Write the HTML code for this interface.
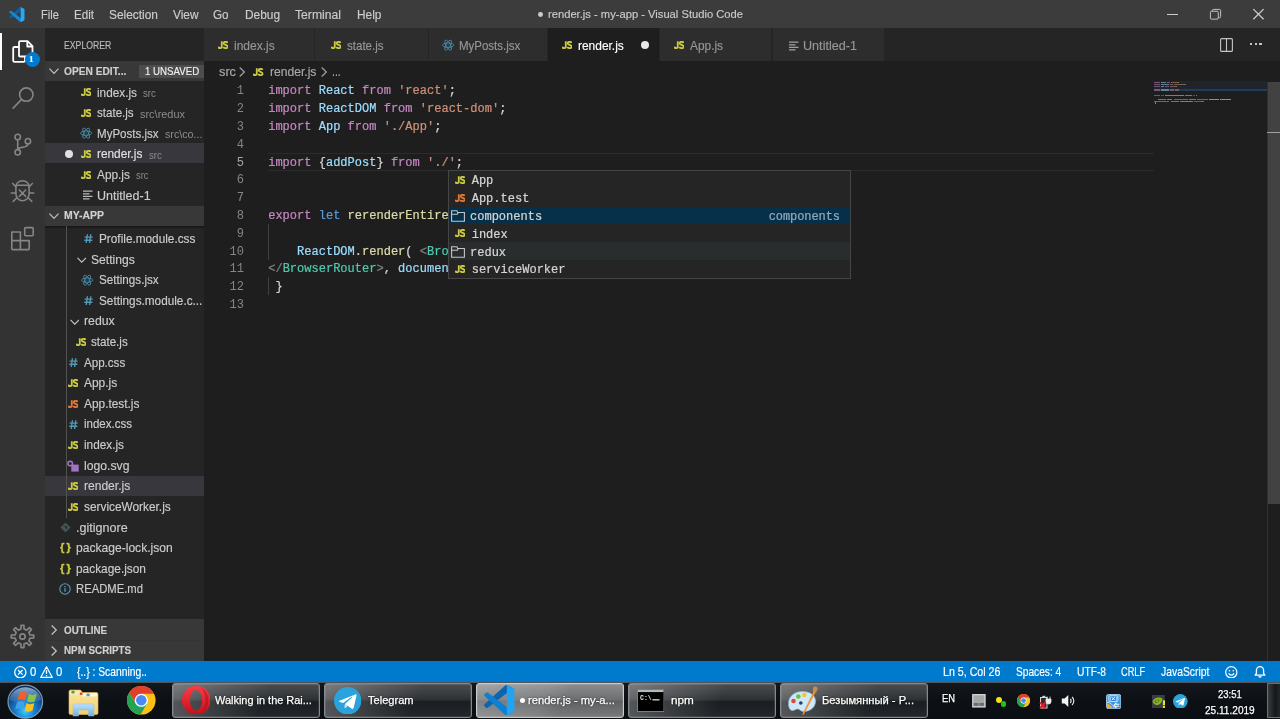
<!DOCTYPE html><html><head><meta charset="utf-8"><title>render.js - my-app - Visual Studio Code</title><style>
html,body{margin:0;padding:0;}
body{width:1280px;height:719px;overflow:hidden;background:#1e1e1e;position:relative;font-family:"Liberation Sans",sans-serif;font-size:12px;color:#ccc;}
div,svg,#w>span{position:absolute;box-sizing:border-box;}
#w{left:0;top:0;width:1280px;height:719px;will-change:transform;}
.t{white-space:pre;line-height:1;}
.ui{font-size:12px;color:#cccccc;-webkit-text-stroke-width:.15px;}
.mono{font-family:"Liberation Mono",monospace;font-size:12px;letter-spacing:0.015px;-webkit-text-stroke-width:.22px;}
.js{font-weight:bold;font-size:9.6px;letter-spacing:-0.5px;color:#cbcb41;white-space:pre;line-height:1;-webkit-text-stroke:.3px #cbcb41;}
.jso{color:#e37933;-webkit-text-stroke:.3px #e37933;}
.desc{font-size:10.8px;color:#8c8c8c;}
.ln{font-family:"Liberation Mono",monospace;font-size:12px;color:#858585;text-align:right;width:40px;left:204px;white-space:pre;line-height:1;}
.k{color:#c586c0}.v{color:#9cdcfe}.s{color:#ce9178}.b{color:#569cd6}.f{color:#dcdcaa}.p{color:#d4d4d4}.c{color:#4ec9b0}.g{color:#808080}
</style></head><body><div id="w">
<div style="left:0px;top:0px;width:1280px;height:28px;background:#3c3c3c;"></div>
<div style="left:0px;top:28px;width:45px;height:633.5px;background:#333333;"></div>
<div style="left:45px;top:28px;width:159.3px;height:633.5px;background:#252526;"></div>
<div style="left:204.3px;top:28px;width:1075.7px;height:33.4px;background:#252526;"></div>
<svg style="left:8.800px;top:6.700px" width="15.800" height="15.200" viewBox="0 0 100 100"><path d="M96.460 10.800 75.860.880a6.230 6.230 0 0 0-7.110 1.200L1.300 63.580a4.170 4.170 0 0 0 0 6.170l5.510 5a4.170 4.170 0 0 0 5.320.24L93.360 13.370C96.090 11.300 100 13.250 100 16.670v-.24a6.250 6.250 0 0 0-3.540-5.630z" fill="#0f5f9e"/><path d="M96.460 89.200 75.860 99.120a6.230 6.230 0 0 1-7.110-1.200L1.300 36.420a4.170 4.170 0 0 1 0-6.170l5.510-5a4.170 4.170 0 0 1 5.320-.24L93.360 86.630C96.090 88.700 100 86.750 100 83.330v.24a6.250 6.250 0 0 1-3.540 5.630z" fill="#1488d4"/><path d="M75.860 99.130a6.230 6.230 0 0 1-7.110-1.210c2.310 2.310 6.250.67 6.250-2.590V4.670c0-3.260-3.940-4.890-6.250-2.590a6.230 6.230 0 0 1 7.110-1.210l20.600 9.910A6.250 6.250 0 0 1 100 16.410v67.180a6.250 6.250 0 0 1-3.540 5.630z" fill="#25a9f5"/></svg>
<span class="t ui" style="left:40.6px;top:8.60px;font-size:12.2px;transform:scaleX(0.9063);transform-origin:0 50%;">File</span>
<span class="t ui" style="left:73.8px;top:8.60px;font-size:12.2px;transform:scaleX(0.9517);transform-origin:0 50%;">Edit</span>
<span class="t ui" style="left:108.8px;top:8.60px;font-size:12.2px;transform:scaleX(0.9773);transform-origin:0 50%;">Selection</span>
<span class="t ui" style="left:172.8px;top:8.60px;font-size:12.2px;transform:scaleX(0.9770);transform-origin:0 50%;">View</span>
<span class="t ui" style="left:213.4px;top:8.60px;font-size:12.2px;transform:scaleX(0.9591);transform-origin:0 50%;">Go</span>
<span class="t ui" style="left:244.7px;top:8.60px;font-size:12.2px;transform:scaleX(0.9743);transform-origin:0 50%;">Debug</span>
<span class="t ui" style="left:295.3px;top:8.60px;font-size:12.2px;transform:scaleX(0.9986);transform-origin:0 50%;">Terminal</span>
<span class="t ui" style="left:356.9px;top:8.60px;font-size:12.2px;transform:scaleX(0.9730);transform-origin:0 50%;">Help</span>
<div style="left:538px;top:12.400px;width:4.800px;height:4.800px;border-radius:50%;background:#cccccc"></div>
<span class="t ui" style="left:547.5px;top:9.20px;font-size:11.4px;transform:scaleX(0.9819);transform-origin:0 50%;">render.js - my-app - Visual Studio Code</span>
<div style="left:1167px;top:13.7px;width:11.3px;height:1px;background:#cccccc;"></div>
<svg style="left:1209.300px;top:8.200px" width="13" height="13" viewBox="0 0 14 14" fill="none" stroke="#cccccc" stroke-width="1"><rect x="1.5" y="3.5" width="8.500" height="8.500" rx="1.200"/><path d="M3.600 3.500V2.700a1.200 1.200 0 0 1 1.200-1.200h6.500a1.200 1.200 0 0 1 1.200 1.200v6.500a1.200 1.200 0 0 1-1.200 1.200h-1.300"/></svg>
<svg style="left:1252px;top:8px" width="13" height="13" viewBox="0 0 13 13" stroke="#cccccc" stroke-width="1.3"><path d="M1.300 1.100 11.600 11.300M11.600 1.100 1.300 11.300"/></svg>
<div style="left:0px;top:33px;width:2px;height:37px;background:#ffffff;"></div>
<svg style="left:10.5px;top:38.500px" width="24" height="25" viewBox="0 0 24 25" fill="none" stroke="#ffffff" stroke-width="1.800" stroke-linejoin="round"><path d="M8 17.500V3.500a1.300 1.300 0 0 1 1.300-1.300h7.200l5 5v9a1.300 1.300 0 0 1-1.300 1.300H9.300A1.300 1.300 0 0 1 8 16.200"/><path d="M16.300 2.400v5.100h5"/><path d="M7.800 8H3.500a1.300 1.300 0 0 0-1.300 1.300v12.200a1.300 1.300 0 0 0 1.300 1.300h9.200a1.300 1.300 0 0 0 1.300-1.300v-3.800"/></svg>
<div style="left:24.5px;top:51.800px;width:15px;height:15px;border-radius:50%;background:#007acc"></div>
<span class="t ui" style="left:29.0px;top:55.00px;font-size:9px;color:#ffffff;font-weight:bold;font-family:'Liberation Serif',serif;">1</span>
<svg style="left:10px;top:84.500px" width="26" height="26" viewBox="0 0 26 26" fill="none" stroke="#858585" stroke-width="1.600"><circle cx="16.300" cy="9.600" r="6.700"/><path d="M11.600 14.400 2.700 23.600"/></svg>
<svg style="left:8px;top:130px" width="30" height="30" viewBox="8 130 30 30" fill="none" stroke="#858585" stroke-width="1.600"><circle cx="17.700" cy="137" r="2.700"/><circle cx="17.700" cy="152.300" r="2.700"/><circle cx="27.900" cy="141.200" r="2.700"/><path d="M17.700 139.700v9.900M27.900 143.900c0 4.600-10.200 2.400-10.200 5.700"/></svg>
<svg style="left:8px;top:176px" width="30" height="30" viewBox="8 176 30 30" fill="none" stroke="#858585" stroke-width="1.500" stroke-linecap="round"><path d="M15.900 186.500c0-3 2.800-5.700 6.600-5.700s6.600 2.700 6.600 5.700v7.300c0 4-3 7-6.600 7s-6.600-3-6.600-7z"/><path d="M16.300 185.300h12.400M16 187l-3.300-3.600M29 187l3.300-3.600M15.800 193.100h-4.600M29.200 193.100h4.600M16.400 198.200l-3.200 3.200M28.600 198.200l3.200 3.200M19.300 190l6.400 6.400M25.700 190l-6.400 6.400"/></svg>
<svg style="left:8px;top:224px" width="30" height="30" viewBox="8 224 30 30" fill="none" stroke="#858585" stroke-width="1.600" stroke-linejoin="round"><path d="M11.800 232h8.600v8.600h8.800v8.200a.8.800 0 0 1-.8.800H12.600a.8.800 0 0 1-.8-.8zM20.400 240.600v9M11.800 240.600h8.600"/><rect x="24.700" y="227.600" width="8.500" height="8.100" rx="1"/></svg>
<svg style="left:10px;top:624.300px" width="25" height="25" viewBox="0 0 25 25" fill="none" stroke="#858585" stroke-width="1.700" stroke-linejoin="round"><circle cx="12.500" cy="12.500" r="2.700"/><path d="M10.960 5.060 L11.080 1.290 L13.920 1.290 L14.040 5.060 L16.670 6.150 L19.430 3.570 L21.430 5.570 L18.850 8.330 L19.940 10.960 L23.710 11.080 L23.710 13.920 L19.940 14.040 L18.850 16.670 L21.430 19.430 L19.430 21.430 L16.670 18.850 L14.040 19.940 L13.920 23.710 L11.080 23.710 L10.960 19.940 L8.330 18.850 L5.570 21.430 L3.570 19.430 L6.150 16.670 L5.060 14.040 L1.290 13.920 L1.290 11.080 L5.060 10.960 L6.150 8.330 L3.570 5.570 L5.570 3.570 L8.330 6.150z"/></svg>
<div style="left:204.3px;top:28px;width:110.0px;height:33.4px;background:#2d2d2d;"></div>
<svg style="left:217.7px;top:41.25px" width="10.150" height="7.900" viewBox="0 0 10.600 8.100" preserveAspectRatio="none" fill="none" stroke="#cbcb41" stroke-width="1.900"><path d="M3.950 0.200V5.300a1.650 1.650 0 0 1-3.500 .55"/><path d="M10.050 1.900C9.500 .55 5.900 .35 5.900 2.350c0 2 4.150 1.300 4.150 3.500 0 2-3.850 1.850-4.550 .25"/></svg>
<span class="t ui" style="left:233.7px;top:39.70px;font-size:12.2px;color:#969696;transform:scaleX(0.9872);transform-origin:0 50%;">index.js</span>
<div style="left:315.3px;top:28px;width:112.30000000000001px;height:33.4px;background:#2d2d2d;"></div>
<svg style="left:330.8px;top:41.25px" width="10.150" height="7.900" viewBox="0 0 10.600 8.100" preserveAspectRatio="none" fill="none" stroke="#cbcb41" stroke-width="1.900"><path d="M3.950 0.200V5.300a1.650 1.650 0 0 1-3.500 .55"/><path d="M10.050 1.900C9.500 .55 5.900 .35 5.900 2.350c0 2 4.150 1.300 4.150 3.500 0 2-3.850 1.850-4.550 .25"/></svg>
<span class="t ui" style="left:346.8px;top:39.70px;font-size:12.2px;color:#969696;transform:scaleX(0.9476);transform-origin:0 50%;">state.js</span>
<div style="left:428.6px;top:28px;width:118.19999999999993px;height:33.4px;background:#2d2d2d;"></div>
<svg style="left:441.8px;top:39.15px" width="12.3" height="12.3" viewBox="-12 -12 24 24" fill="none" stroke="#4f95b4" stroke-width="1.500"><ellipse rx="11" ry="4.300"/><ellipse rx="11" ry="4.300" transform="rotate(60)"/><ellipse rx="11" ry="4.300" transform="rotate(120)"/><circle r="2.300" fill="#0f4a63" stroke="none"/></svg>
<span class="t ui" style="left:459.3px;top:39.70px;font-size:12.2px;color:#969696;transform:scaleX(0.9429);transform-origin:0 50%;">MyPosts.jsx</span>
<div style="left:547.8px;top:28px;width:111.40000000000009px;height:33.4px;background:#1e1e1e;"></div>
<svg style="left:561.9px;top:41.25px" width="10.150" height="7.900" viewBox="0 0 10.600 8.100" preserveAspectRatio="none" fill="none" stroke="#cbcb41" stroke-width="1.900"><path d="M3.950 0.200V5.300a1.650 1.650 0 0 1-3.500 .55"/><path d="M10.050 1.900C9.500 .55 5.900 .35 5.900 2.350c0 2 4.150 1.300 4.150 3.500 0 2-3.850 1.850-4.550 .25"/></svg>
<span class="t ui" style="left:578px;top:39.70px;font-size:12.2px;color:#ffffff;transform:scaleX(0.9797);transform-origin:0 50%;">render.js</span>
<div style="left:660.2px;top:28px;width:111.29999999999995px;height:33.4px;background:#2d2d2d;"></div>
<svg style="left:674.1px;top:41.25px" width="10.150" height="7.900" viewBox="0 0 10.600 8.100" preserveAspectRatio="none" fill="none" stroke="#cbcb41" stroke-width="1.900"><path d="M3.950 0.200V5.300a1.650 1.650 0 0 1-3.500 .55"/><path d="M10.050 1.900C9.500 .55 5.900 .35 5.900 2.350c0 2 4.150 1.300 4.150 3.500 0 2-3.850 1.850-4.550 .25"/></svg>
<span class="t ui" style="left:690.4px;top:39.70px;font-size:12.2px;color:#969696;transform:scaleX(0.9742);transform-origin:0 50%;">App.js</span>
<div style="left:772.5px;top:28px;width:111.0px;height:33.4px;background:#2d2d2d;"></div>
<svg style="left:788.9px;top:40.50px" width="10" height="10" viewBox="0 0 10 10" stroke="#a0a0a0" stroke-width="1.300"><path d="M0 1.200h9.500M0 3.800h6.500M0 6.300h9.500M0 8.800h6.500"/></svg>
<span class="t ui" style="left:803px;top:39.70px;font-size:12.2px;color:#969696;transform:scaleX(1.0350);transform-origin:0 50%;">Untitled-1</span>
<div style="left:640.700px;top:41.100px;width:8px;height:8px;border-radius:50%;background:#e8e8e8"></div>
<svg style="left:1219.500px;top:37.500px" width="13" height="14" viewBox="0 0 13 14" fill="none" stroke="#c5c5c5" stroke-width="1.100"><rect x=".6" y=".6" width="11.800" height="12.800" rx="1"/><path d="M6.500.6v12.800"/></svg>
<div style="left:1250.0px;top:43.3px;width:2.2px;height:1.8px;background:#c5c5c5;"></div>
<div style="left:1254.7px;top:43.3px;width:2.2px;height:1.8px;background:#c5c5c5;"></div>
<div style="left:1259.4px;top:43.3px;width:2.2px;height:1.8px;background:#c5c5c5;"></div>
<span class="t ui" style="left:63.7px;top:41.20px;font-size:10.4px;color:#bbbbbb;transform:scaleX(0.8358);transform-origin:0 50%;">EXPLORER</span>
<div style="left:45px;top:61px;width:159.3px;height:20.4px;background:#383839;"></div>
<svg style="left:48.8px;top:68.30px" width="10" height="6.500" viewBox="0 0 10 6.500" fill="none" stroke="#c5c5c5" stroke-width="1.200"><path d="M.5.7 5 5.300 9.500.7"/></svg>
<span class="t ui" style="left:63.7px;top:67.20px;font-size:10.4px;color:#d0d0d0;font-weight:bold;transform:scaleX(0.9809);transform-origin:0 50%;">OPEN EDIT...</span>
<div style="left:138.7px;top:64.5px;width:65.6px;height:13.8px;background:#4d4d4d;"></div>
<span class="t ui" style="left:144.5px;top:67.10px;font-size:10.4px;color:#f0f0f0;transform:scaleX(0.9339);transform-origin:0 50%;">1 UNSAVED</span>
<svg style="left:80.9px;top:88.46px" width="10.150" height="7.900" viewBox="0 0 10.600 8.100" preserveAspectRatio="none" fill="none" stroke="#cbcb41" stroke-width="1.900"><path d="M3.950 0.200V5.300a1.650 1.650 0 0 1-3.500 .55"/><path d="M10.050 1.900C9.500 .55 5.900 .35 5.900 2.350c0 2 4.150 1.300 4.150 3.500 0 2-3.850 1.850-4.550 .25"/></svg>
<span class="t ui" style="left:97.1px;top:86.51px;font-size:12.2px;color:#cccccc;transform:scaleX(0.9654);transform-origin:0 50%;">index.js</span>
<span class="t desc" style="left:143px;top:87.91px;font-size:10.8px;transform:scaleX(0.8885);transform-origin:0 50%;">src</span>
<svg style="left:80.9px;top:109.07px" width="10.150" height="7.900" viewBox="0 0 10.600 8.100" preserveAspectRatio="none" fill="none" stroke="#cbcb41" stroke-width="1.900"><path d="M3.950 0.200V5.300a1.650 1.650 0 0 1-3.500 .55"/><path d="M10.050 1.900C9.500 .55 5.900 .35 5.900 2.350c0 2 4.150 1.300 4.150 3.500 0 2-3.850 1.850-4.550 .25"/></svg>
<span class="t ui" style="left:97.1px;top:107.12px;font-size:12.2px;color:#cccccc;transform:scaleX(0.9489);transform-origin:0 50%;">state.js</span>
<span class="t desc" style="left:139.5px;top:108.52px;font-size:10.8px;transform:scaleX(1.0134);transform-origin:0 50%;">src\redux</span>
<svg style="left:80.2px;top:127.09px" width="12.3" height="12.3" viewBox="-12 -12 24 24" fill="none" stroke="#4f95b4" stroke-width="1.500"><ellipse rx="11" ry="4.300"/><ellipse rx="11" ry="4.300" transform="rotate(60)"/><ellipse rx="11" ry="4.300" transform="rotate(120)"/><circle r="2.300" fill="#0f4a63" stroke="none"/></svg>
<span class="t ui" style="left:97.1px;top:127.74px;font-size:12.2px;color:#cccccc;transform:scaleX(0.9482);transform-origin:0 50%;">MyPosts.jsx</span>
<span class="t desc" style="left:164.5px;top:129.14px;font-size:10.8px;transform:scaleX(0.9921);transform-origin:0 50%;">src\co...</span>
<div style="left:45px;top:143.14499999999998px;width:159.3px;height:20.215px;background:#37373d;"></div>
<div style="left:64.800px;top:149.75px;width:8px;height:8px;border-radius:50%;background:#e0e0e0"></div>
<svg style="left:80.9px;top:150.30px" width="10.150" height="7.900" viewBox="0 0 10.600 8.100" preserveAspectRatio="none" fill="none" stroke="#cbcb41" stroke-width="1.900"><path d="M3.950 0.200V5.300a1.650 1.650 0 0 1-3.500 .55"/><path d="M10.050 1.900C9.500 .55 5.900 .35 5.900 2.350c0 2 4.150 1.300 4.150 3.500 0 2-3.850 1.850-4.550 .25"/></svg>
<span class="t ui" style="left:97.1px;top:148.35px;font-size:12.2px;color:#e0e0e0;transform:scaleX(0.9711);transform-origin:0 50%;">render.js</span>
<span class="t desc" style="left:148.75px;top:149.75px;font-size:10.8px;transform:scaleX(0.9024);transform-origin:0 50%;">src</span>
<svg style="left:80.9px;top:170.92px" width="10.150" height="7.900" viewBox="0 0 10.600 8.100" preserveAspectRatio="none" fill="none" stroke="#cbcb41" stroke-width="1.900"><path d="M3.950 0.200V5.300a1.650 1.650 0 0 1-3.500 .55"/><path d="M10.050 1.900C9.500 .55 5.900 .35 5.900 2.350c0 2 4.150 1.300 4.150 3.500 0 2-3.850 1.850-4.550 .25"/></svg>
<span class="t ui" style="left:97.1px;top:168.97px;font-size:12.2px;color:#cccccc;transform:scaleX(0.9712);transform-origin:0 50%;">App.js</span>
<span class="t desc" style="left:136.25px;top:170.37px;font-size:10.8px;transform:scaleX(0.8677);transform-origin:0 50%;">src</span>
<svg style="left:83px;top:190.38px" width="10" height="10" viewBox="0 0 10 10" stroke="#b8b8b8" stroke-width="1.300"><path d="M0 1.200h9.500M0 3.800h6.500M0 6.300h9.500M0 8.800h6.500"/></svg>
<span class="t ui" style="left:97.1px;top:189.58px;font-size:12.2px;color:#cccccc;transform:scaleX(1.0283);transform-origin:0 50%;">Untitled-1</span>
<div style="left:45px;top:205.5px;width:159.3px;height:20.4px;background:#383839;"></div>
<svg style="left:48.8px;top:212.60px" width="10" height="6.500" viewBox="0 0 10 6.500" fill="none" stroke="#c5c5c5" stroke-width="1.200"><path d="M.5.7 5 5.300 9.500.7"/></svg>
<span class="t ui" style="left:63.7px;top:211.40px;font-size:10.4px;color:#d0d0d0;font-weight:bold;transform:scaleX(1.0052);transform-origin:0 50%;">MY-APP</span>
<div style="left:45px;top:225.900px;width:159.300px;height:3.500px;background:linear-gradient(#141414,rgba(37,37,38,0))"></div>
<svg style="left:83.7px;top:234.20px" width="9" height="9.300" viewBox="0 0 10 10.500" fill="none" stroke="#519aba" stroke-width="1.550"><path d="M3.800.3 2.400 10.200M7.600.3 6.200 10.200M.6 3.500h9.200M.2 7.100h9.200"/></svg>
<span class="t ui" style="left:99.1px;top:232.90px;font-size:12.2px;transform:scaleX(0.9681);transform-origin:0 50%;">Profile.module.css</span>
<svg style="left:77px;top:257.00px" width="9.5" height="6.500" viewBox="0 0 10 6.500" fill="none" stroke="#c5c5c5" stroke-width="1.200"><path d="M.5.7 5 5.300 9.500.7"/></svg>
<span class="t ui" style="left:91.3px;top:253.60px;font-size:12.2px;transform:scaleX(0.9921);transform-origin:0 50%;">Settings</span>
<svg style="left:81.3px;top:273.95px" width="12.3" height="12.3" viewBox="-12 -12 24 24" fill="none" stroke="#4f95b4" stroke-width="1.500"><ellipse rx="11" ry="4.300"/><ellipse rx="11" ry="4.300" transform="rotate(60)"/><ellipse rx="11" ry="4.300" transform="rotate(120)"/><circle r="2.300" fill="#0f4a63" stroke="none"/></svg>
<span class="t ui" style="left:99.1px;top:274.20px;font-size:12.2px;transform:scaleX(0.9570);transform-origin:0 50%;">Settings.jsx</span>
<svg style="left:83.7px;top:296.10px" width="9" height="9.300" viewBox="0 0 10 10.500" fill="none" stroke="#519aba" stroke-width="1.550"><path d="M3.800.3 2.400 10.200M7.600.3 6.200 10.200M.6 3.500h9.200M.2 7.100h9.200"/></svg>
<span class="t ui" style="left:99.1px;top:294.80px;font-size:12.2px;transform:scaleX(0.9659);transform-origin:0 50%;">Settings.module.c...</span>
<svg style="left:69.5px;top:318.80px" width="9.5" height="6.500" viewBox="0 0 10 6.500" fill="none" stroke="#c5c5c5" stroke-width="1.200"><path d="M.5.7 5 5.300 9.500.7"/></svg>
<span class="t ui" style="left:83.8px;top:315.40px;font-size:12.2px;transform:scaleX(1.0066);transform-origin:0 50%;">redux</span>
<svg style="left:75.7px;top:337.85px" width="10.150" height="7.900" viewBox="0 0 10.600 8.100" preserveAspectRatio="none" fill="none" stroke="#cbcb41" stroke-width="1.900"><path d="M3.950 0.200V5.300a1.650 1.650 0 0 1-3.500 .55"/><path d="M10.050 1.900C9.500 .55 5.900 .35 5.900 2.350c0 2 4.150 1.300 4.150 3.500 0 2-3.850 1.850-4.550 .25"/></svg>
<span class="t ui" style="left:91.3px;top:336.00px;font-size:12.2px;transform:scaleX(0.9502);transform-origin:0 50%;">state.js</span>
<svg style="left:68.7px;top:357.90px" width="9" height="9.300" viewBox="0 0 10 10.500" fill="none" stroke="#519aba" stroke-width="1.550"><path d="M3.800.3 2.400 10.200M7.600.3 6.200 10.200M.6 3.500h9.200M.2 7.100h9.200"/></svg>
<span class="t ui" style="left:83.8px;top:356.60px;font-size:12.2px;transform:scaleX(0.9502);transform-origin:0 50%;">App.css</span>
<svg style="left:68.2px;top:379.05px" width="10.150" height="7.900" viewBox="0 0 10.600 8.100" preserveAspectRatio="none" fill="none" stroke="#cbcb41" stroke-width="1.900"><path d="M3.950 0.200V5.300a1.650 1.650 0 0 1-3.500 .55"/><path d="M10.050 1.900C9.500 .55 5.900 .35 5.900 2.350c0 2 4.150 1.300 4.150 3.500 0 2-3.850 1.850-4.550 .25"/></svg>
<span class="t ui" style="left:83.8px;top:377.20px;font-size:12.2px;transform:scaleX(0.9801);transform-origin:0 50%;">App.js</span>
<svg style="left:68.2px;top:399.65px" width="10.150" height="7.900" viewBox="0 0 10.600 8.100" preserveAspectRatio="none" fill="none" stroke="#e37933" stroke-width="1.900"><path d="M3.950 0.200V5.300a1.650 1.650 0 0 1-3.500 .55"/><path d="M10.050 1.900C9.500 .55 5.900 .35 5.900 2.350c0 2 4.150 1.300 4.150 3.500 0 2-3.850 1.850-4.550 .25"/></svg>
<span class="t ui" style="left:83.8px;top:397.80px;font-size:12.2px;transform:scaleX(0.9744);transform-origin:0 50%;">App.test.js</span>
<svg style="left:68.7px;top:419.70px" width="9" height="9.300" viewBox="0 0 10 10.500" fill="none" stroke="#519aba" stroke-width="1.550"><path d="M3.800.3 2.400 10.200M7.600.3 6.200 10.200M.6 3.500h9.200M.2 7.100h9.200"/></svg>
<span class="t ui" style="left:83.8px;top:418.40px;font-size:12.2px;transform:scaleX(0.9437);transform-origin:0 50%;">index.css</span>
<svg style="left:68.2px;top:440.85px" width="10.150" height="7.900" viewBox="0 0 10.600 8.100" preserveAspectRatio="none" fill="none" stroke="#cbcb41" stroke-width="1.900"><path d="M3.950 0.200V5.300a1.650 1.650 0 0 1-3.500 .55"/><path d="M10.050 1.900C9.500 .55 5.900 .35 5.900 2.350c0 2 4.150 1.300 4.150 3.500 0 2-3.850 1.850-4.550 .25"/></svg>
<span class="t ui" style="left:83.8px;top:439.00px;font-size:12.2px;transform:scaleX(0.9667);transform-origin:0 50%;">index.js</span>
<svg style="left:67.3px;top:459.70px" width="12" height="12" viewBox="0 0 12 12"><circle cx="3.200" cy="3.500" r="2.300" fill="none" stroke="#a074c4" stroke-width="1.500"/><rect x="4.300" y="4.600" width="7.400" height="7" fill="#a074c4"/></svg>
<span class="t ui" style="left:83.8px;top:459.60px;font-size:12.2px;transform:scaleX(1.0010);transform-origin:0 50%;">logo.svg</span>
<div style="left:45px;top:475.8px;width:159.3px;height:20px;background:#37373d;"></div>
<svg style="left:68.2px;top:482.05px" width="10.150" height="7.900" viewBox="0 0 10.600 8.100" preserveAspectRatio="none" fill="none" stroke="#cbcb41" stroke-width="1.900"><path d="M3.950 0.200V5.300a1.650 1.650 0 0 1-3.500 .55"/><path d="M10.050 1.900C9.500 .55 5.900 .35 5.900 2.350c0 2 4.150 1.300 4.150 3.500 0 2-3.850 1.850-4.550 .25"/></svg>
<span class="t ui" style="left:83.8px;top:480.20px;font-size:12.2px;transform:scaleX(0.9882);transform-origin:0 50%;">render.js</span>
<svg style="left:68.2px;top:502.65px" width="10.150" height="7.900" viewBox="0 0 10.600 8.100" preserveAspectRatio="none" fill="none" stroke="#cbcb41" stroke-width="1.900"><path d="M3.950 0.200V5.300a1.650 1.650 0 0 1-3.500 .55"/><path d="M10.050 1.900C9.500 .55 5.900 .35 5.900 2.350c0 2 4.150 1.300 4.150 3.500 0 2-3.850 1.850-4.550 .25"/></svg>
<span class="t ui" style="left:83.8px;top:500.80px;font-size:12.2px;transform:scaleX(0.9723);transform-origin:0 50%;">serviceWorker.js</span>
<svg style="left:60px;top:522.10px" width="11" height="11" viewBox="0 0 11 11"><rect x="1.900" y="1.900" width="7.200" height="7.200" transform="rotate(45 5.500 5.500)" fill="#41535b"/><path d="M4 3.500 6.500 6M6.500 4v3" stroke="#252526" stroke-width="1" fill="none"/></svg>
<span class="t ui" style="left:76.3px;top:521.50px;font-size:12.2px;transform:scaleX(1.0311);transform-origin:0 50%;">.gitignore</span>
<span class="t ui" style="left:60px;top:542.40px;font-size:11.2px;color:#cbcb41;letter-spacing:-0.5px;font-weight:bold;-webkit-text-stroke:.35px #cbcb41;">{ }</span>
<span class="t ui" style="left:76.3px;top:542.10px;font-size:12.2px;transform:scaleX(0.9912);transform-origin:0 50%;">package-lock.json</span>
<span class="t ui" style="left:60px;top:563.00px;font-size:11.2px;color:#cbcb41;letter-spacing:-0.5px;font-weight:bold;-webkit-text-stroke:.35px #cbcb41;">{ }</span>
<span class="t ui" style="left:76.3px;top:562.70px;font-size:12.2px;transform:scaleX(0.9739);transform-origin:0 50%;">package.json</span>
<svg style="left:59.2px;top:583.40px" width="12" height="12" viewBox="0 0 12 12" fill="none" stroke="#519aba" stroke-width="1.100"><circle cx="6" cy="6" r="5.200"/><path d="M6 5.200v3.600M6 3v1.300" stroke-width="1.400"/></svg>
<span class="t ui" style="left:76.3px;top:583.30px;font-size:12.2px;transform:scaleX(0.9238);transform-origin:0 50%;">README.md</span>
<div style="left:65.6px;top:226px;width:1px;height:291.5px;background:#525252;"></div>
<div style="left:204.3px;top:290px;width:4px;height:22px;background:#1e1e1e;"></div>
<div style="left:45px;top:619.3px;width:159.3px;height:42.2px;background:#383839;"></div>
<div style="left:45px;top:640.3px;width:159.3px;height:1px;background:#343435;"></div>
<svg style="left:51.3px;top:625.20px" width="6.500" height="10" viewBox="0 0 6.500 10" fill="none" stroke="#c5c5c5" stroke-width="1.200"><path d="M.7.5 5.300 5 .7 9.500"/></svg>
<span class="t ui" style="left:63.7px;top:625.90px;font-size:10.4px;color:#d0d0d0;font-weight:bold;transform:scaleX(0.9439);transform-origin:0 50%;">OUTLINE</span>
<svg style="left:51.3px;top:645.70px" width="6.500" height="10" viewBox="0 0 6.500 10" fill="none" stroke="#c5c5c5" stroke-width="1.200"><path d="M.7.5 5.300 5 .7 9.500"/></svg>
<span class="t ui" style="left:63.7px;top:646.40px;font-size:10.4px;color:#d0d0d0;font-weight:bold;transform:scaleX(0.9442);transform-origin:0 50%;">NPM SCRIPTS</span>
<span class="t ui" style="left:219px;top:66.40px;font-size:12.2px;color:#a9a9a9;transform:scaleX(1.0462);transform-origin:0 50%;">src</span>
<svg style="left:238.5px;top:67.30px" width="6.500" height="10" viewBox="0 0 6.500 10" fill="none" stroke="#a0a0a0" stroke-width="1.200"><path d="M.7.5 5.300 5 .7 9.500"/></svg>
<svg style="left:253.4px;top:67.75px" width="10.150" height="7.900" viewBox="0 0 10.600 8.100" preserveAspectRatio="none" fill="none" stroke="#cbcb41" stroke-width="1.900"><path d="M3.950 0.200V5.300a1.650 1.650 0 0 1-3.500 .55"/><path d="M10.050 1.900C9.500 .55 5.900 .35 5.900 2.350c0 2 4.150 1.300 4.150 3.500 0 2-3.850 1.850-4.550 .25"/></svg>
<span class="t ui" style="left:269.5px;top:66.40px;font-size:12.2px;color:#a9a9a9;transform:scaleX(0.9925);transform-origin:0 50%;">render.js</span>
<svg style="left:320.8px;top:67.30px" width="6.500" height="10" viewBox="0 0 6.500 10" fill="none" stroke="#a0a0a0" stroke-width="1.200"><path d="M.7.5 5.300 5 .7 9.500"/></svg>
<span class="t ui" style="left:331.6px;top:66.40px;font-size:12.2px;color:#a9a9a9;transform:scaleX(0.8553);transform-origin:0 50%;">...</span>
<div style="left:268px;top:152.81599999999997px;width:886px;height:17.804px;background:transparent;border-top:1px solid #2b2b2b;border-bottom:1px solid #2b2b2b;"></div>
<span class="ln" style="top:85.40px;color:#858585">1</span>
<span class="t mono" style="left:268.2px;top:85.40px;"><span class="k">import</span> <span class="v">React</span> <span class="k">from</span> <span class="s">'react'</span><span class="p">;</span></span>
<span class="ln" style="top:103.20px;color:#858585">2</span>
<span class="t mono" style="left:268.2px;top:103.20px;"><span class="k">import</span> <span class="v">ReactDOM</span> <span class="k">from</span> <span class="s">'react-dom'</span><span class="p">;</span></span>
<span class="ln" style="top:121.01px;color:#858585">3</span>
<span class="t mono" style="left:268.2px;top:121.01px;"><span class="k">import</span> <span class="v">App</span> <span class="k">from</span> <span class="s">'./App'</span><span class="p">;</span></span>
<span class="ln" style="top:138.81px;color:#858585">4</span>
<span class="ln" style="top:156.62px;color:#a8a8a8">5</span>
<span class="t mono" style="left:268.2px;top:156.62px;"><span class="k">import</span> <span class="p">{</span><span class="v">addPost</span><span class="p">}</span> <span class="k">from</span> <span class="s">'./'</span><span class="p">;</span></span>
<span class="ln" style="top:174.42px;color:#858585">6</span>
<span class="ln" style="top:192.22px;color:#858585">7</span>
<span class="ln" style="top:210.03px;color:#858585">8</span>
<span class="t mono" style="left:268.2px;top:210.03px;"><span class="k">export</span> <span class="b">let</span> <span class="f">rerenderEntire</span></span>
<span class="ln" style="top:227.83px;color:#858585">9</span>
<span class="ln" style="top:245.64px;color:#858585">10</span>
<span class="t mono" style="left:268.2px;top:245.64px;">    <span class="v">ReactDOM</span><span class="p">.</span><span class="f">render</span><span class="p">(</span> <span class="g">&lt;</span><span class="c">Bro</span></span>
<span class="ln" style="top:263.44px;color:#858585">11</span>
<span class="t mono" style="left:268.2px;top:263.44px;"><span class="g">&lt;/</span><span class="c">BrowserRouter</span><span class="g">&gt;</span><span class="p">,</span> <span class="v">documen</span></span>
<span class="ln" style="top:281.24px;color:#858585">12</span>
<span class="t mono" style="left:268.2px;top:281.24px;"> <span class="p">}</span></span>
<span class="ln" style="top:299.05px;color:#858585">13</span>
<div style="left:268px;top:224.03199999999998px;width:1px;height:35.608px;background:#404040;"></div>
<div style="left:268px;top:277.44399999999996px;width:1px;height:17.804px;background:#404040;"></div>
<div style="left:1154px;top:81.3px;width:113px;height:9.5px;background:#1f252b;"></div>
<div style="left:1154px;top:89.0px;width:113px;height:1.9px;background:#1f3c5a;"></div>
<div style="left:1154.3px;top:81.89999999999999px;width:5.699999999999999px;height:1.4px;background:#8a5f86;opacity:.8;"></div>
<div style="left:1160.95px;top:81.89999999999999px;width:4.75px;height:1.4px;background:#6d97b0;opacity:.8;"></div>
<div style="left:1166.6499999999999px;top:81.89999999999999px;width:3.8px;height:1.4px;background:#8a5f86;opacity:.8;"></div>
<div style="left:1171.3999999999999px;top:81.89999999999999px;width:6.6499999999999995px;height:1.4px;background:#8e6a59;opacity:.8;"></div>
<div style="left:1178.05px;top:81.89999999999999px;width:0.95px;height:1.4px;background:#888;opacity:.8;"></div>
<div style="left:1154.3px;top:83.77px;width:5.699999999999999px;height:1.4px;background:#8a5f86;opacity:.8;"></div>
<div style="left:1160.95px;top:83.77px;width:7.6px;height:1.4px;background:#6d97b0;opacity:.8;"></div>
<div style="left:1169.5px;top:83.77px;width:3.8px;height:1.4px;background:#8a5f86;opacity:.8;"></div>
<div style="left:1174.25px;top:83.77px;width:10.45px;height:1.4px;background:#8e6a59;opacity:.8;"></div>
<div style="left:1184.7px;top:83.77px;width:0.95px;height:1.4px;background:#888;opacity:.8;"></div>
<div style="left:1154.3px;top:85.63999999999999px;width:5.699999999999999px;height:1.4px;background:#8a5f86;opacity:.8;"></div>
<div style="left:1160.95px;top:85.63999999999999px;width:2.8499999999999996px;height:1.4px;background:#6d97b0;opacity:.8;"></div>
<div style="left:1164.75px;top:85.63999999999999px;width:3.8px;height:1.4px;background:#8a5f86;opacity:.8;"></div>
<div style="left:1169.5px;top:85.63999999999999px;width:6.6499999999999995px;height:1.4px;background:#8e6a59;opacity:.8;"></div>
<div style="left:1176.1499999999999px;top:85.63999999999999px;width:0.95px;height:1.4px;background:#888;opacity:.8;"></div>
<div style="left:1154.3px;top:89.38px;width:5.699999999999999px;height:1.4px;background:#8a5f86;opacity:.8;"></div>
<div style="left:1160.95px;top:89.38px;width:8.549999999999999px;height:1.4px;background:#6d97b0;opacity:.8;"></div>
<div style="left:1170.45px;top:89.38px;width:3.8px;height:1.4px;background:#8a5f86;opacity:.8;"></div>
<div style="left:1175.2px;top:89.38px;width:3.8px;height:1.4px;background:#8e6a59;opacity:.8;"></div>
<div style="left:1154.3px;top:94.99px;width:5.699999999999999px;height:1.4px;background:#8a5f86;opacity:.8;"></div>
<div style="left:1160.95px;top:94.99px;width:2.8499999999999996px;height:1.4px;background:#44698a;opacity:.8;"></div>
<div style="left:1164.75px;top:94.99px;width:19.0px;height:1.4px;background:#99997a;opacity:.8;"></div>
<div style="left:1184.7px;top:94.99px;width:7.6px;height:1.4px;background:#6d97b0;opacity:.8;"></div>
<div style="left:1193.25px;top:94.99px;width:1.9px;height:1.4px;background:#44698a;opacity:.8;"></div>
<div style="left:1196.1px;top:94.99px;width:0.95px;height:1.4px;background:#888;opacity:.8;"></div>
<div style="left:1158.1px;top:98.72999999999999px;width:7.6px;height:1.4px;background:#6d97b0;opacity:.8;"></div>
<div style="left:1166.6499999999999px;top:98.72999999999999px;width:5.699999999999999px;height:1.4px;background:#99997a;opacity:.8;"></div>
<div style="left:1174.25px;top:98.72999999999999px;width:13.299999999999999px;height:1.4px;background:#3f9884;opacity:.8;"></div>
<div style="left:1188.5px;top:98.72999999999999px;width:7.6px;height:1.4px;background:#6d97b0;opacity:.8;"></div>
<div style="left:1197.05px;top:98.72999999999999px;width:11.399999999999999px;height:1.4px;background:#3f9884;opacity:.8;"></div>
<div style="left:1209.3999999999999px;top:98.72999999999999px;width:9.5px;height:1.4px;background:#aaa;opacity:.8;"></div>
<div style="left:1219.85px;top:98.72999999999999px;width:11.399999999999999px;height:1.4px;background:#aaa;opacity:.8;"></div>
<div style="left:1154.3px;top:100.6px;width:15.2px;height:1.4px;background:#3f9884;opacity:.8;"></div>
<div style="left:1171.3999999999999px;top:100.6px;width:7.6px;height:1.4px;background:#6d97b0;opacity:.8;"></div>
<div style="left:1179.95px;top:100.6px;width:13.299999999999999px;height:1.4px;background:#99997a;opacity:.8;"></div>
<div style="left:1194.2px;top:100.6px;width:6.6499999999999995px;height:1.4px;background:#8e6a59;opacity:.8;"></div>
<div style="left:1200.85px;top:100.6px;width:2.8499999999999996px;height:1.4px;background:#888;opacity:.8;"></div>
<div style="left:1155.25px;top:102.47px;width:0.95px;height:1.4px;background:#999;opacity:.8;"></div>
<div style="left:1266.7px;top:81.6px;width:13.3px;height:422.5px;background:#424242;"></div>
<div style="left:1266.7px;top:81.6px;width:1px;height:580px;background:#303030;"></div>
<div style="left:1267px;top:131.7px;width:13px;height:1.6px;background:#a0a0a0;"></div>
<div style="left:448.2px;top:170.0px;width:402.6px;height:108.9px;background:#252526;border:1px solid #454545;"></div>
<svg style="left:455.3px;top:175.95px" width="10.150" height="7.900" viewBox="0 0 10.600 8.100" preserveAspectRatio="none" fill="none" stroke="#cbcb41" stroke-width="1.900"><path d="M3.950 0.200V5.300a1.650 1.650 0 0 1-3.500 .55"/><path d="M10.050 1.900C9.500 .55 5.900 .35 5.900 2.350c0 2 4.150 1.300 4.150 3.500 0 2-3.850 1.850-4.550 .25"/></svg>
<span class="t mono" style="left:471.7px;top:175.30px;color:#d4d4d4">App</span>
<svg style="left:455.3px;top:193.76px" width="10.150" height="7.900" viewBox="0 0 10.600 8.100" preserveAspectRatio="none" fill="none" stroke="#e37933" stroke-width="1.900"><path d="M3.950 0.200V5.300a1.650 1.650 0 0 1-3.500 .55"/><path d="M10.050 1.900C9.500 .55 5.900 .35 5.900 2.350c0 2 4.150 1.300 4.150 3.500 0 2-3.850 1.850-4.550 .25"/></svg>
<span class="t mono" style="left:471.7px;top:193.10px;color:#d4d4d4">App.test</span>
<div style="left:449.2px;top:206.608px;width:400.6px;height:17.804px;background:#062f4a;"></div>
<svg style="left:451.3px;top:210.01px" width="14" height="12" viewBox="0 0 14 12" fill="none" stroke="#c5c5c5" stroke-width="1.100"><path d="M.6 11.300V.7h5.200l1 1.800h6.600v8.800z"/><path d="M.6 4.300h5.700l1-1.800"/></svg>
<span class="t mono" style="left:470px;top:210.91px;color:#d4d4d4">components</span>
<svg style="left:455.3px;top:229.36px" width="10.150" height="7.900" viewBox="0 0 10.600 8.100" preserveAspectRatio="none" fill="none" stroke="#cbcb41" stroke-width="1.900"><path d="M3.950 0.200V5.300a1.650 1.650 0 0 1-3.500 .55"/><path d="M10.050 1.900C9.500 .55 5.900 .35 5.900 2.350c0 2 4.150 1.300 4.150 3.500 0 2-3.850 1.850-4.550 .25"/></svg>
<span class="t mono" style="left:471.7px;top:228.71px;color:#d4d4d4">index</span>
<div style="left:449.2px;top:242.216px;width:400.6px;height:17.804px;background:#2a2d2e;"></div>
<svg style="left:451.3px;top:245.62px" width="14" height="12" viewBox="0 0 14 12" fill="none" stroke="#c5c5c5" stroke-width="1.100"><path d="M.6 11.300V.7h5.200l1 1.800h6.600v8.800z"/><path d="M.6 4.300h5.700l1-1.800"/></svg>
<span class="t mono" style="left:470px;top:246.52px;color:#d4d4d4">redux</span>
<svg style="left:455.3px;top:264.97px" width="10.150" height="7.900" viewBox="0 0 10.600 8.100" preserveAspectRatio="none" fill="none" stroke="#cbcb41" stroke-width="1.900"><path d="M3.950 0.200V5.300a1.650 1.650 0 0 1-3.500 .55"/><path d="M10.050 1.900C9.500 .55 5.900 .35 5.900 2.350c0 2 4.150 1.300 4.150 3.500 0 2-3.850 1.850-4.550 .25"/></svg>
<span class="t mono" style="left:471.7px;top:264.32px;color:#d4d4d4">serviceWorker</span>
<span class="t mono" style="left:768.700px;top:210.91px;color:#8fa9bd;letter-spacing:-0.07px">components</span>
<div style="left:0px;top:661.3px;width:1280px;height:20.9px;background:#007acc;"></div>
<svg style="left:14px;top:665.70px" width="12.600" height="12.600" viewBox="0 0 12.600 12.600" fill="none" stroke="#ffffff" stroke-width="1.300"><circle cx="6.300" cy="6.300" r="5.600"/><path d="M4 4l4.600 4.600M8.600 4 4 8.600"/></svg>
<span class="t ui" style="left:30px;top:666.20px;font-size:12.2px;color:#ffffff;transform:scaleX(0.9290);transform-origin:0 50%;">0</span>
<svg style="left:39.500px;top:665.70px" width="13" height="12.200" viewBox="0 0 13 12.200" fill="none" stroke="#ffffff" stroke-width="1.250" stroke-linejoin="round"><path d="M6.500.8 12.300 11.500H.7z"/><path d="M6.500 4.300v3.800M6.500 9v1.300" stroke-width="1.300"/></svg>
<span class="t ui" style="left:55.6px;top:666.20px;font-size:12.2px;color:#ffffff;transform:scaleX(0.9290);transform-origin:0 50%;">0</span>
<span class="t ui" style="left:76.9px;top:666.20px;font-size:12.2px;color:#ffffff;transform:scaleX(0.8467);transform-origin:0 50%;">{..} : Scanning..</span>
<span class="t ui" style="left:943.1px;top:666.20px;font-size:12.2px;color:#ffffff;transform:scaleX(0.8732);transform-origin:0 50%;">Ln 5, Col 26</span>
<span class="t ui" style="left:1016.1px;top:666.20px;font-size:12.2px;color:#ffffff;transform:scaleX(0.8339);transform-origin:0 50%;">Spaces: 4</span>
<span class="t ui" style="left:1076.8px;top:666.20px;font-size:12.2px;color:#ffffff;transform:scaleX(0.8398);transform-origin:0 50%;">UTF-8</span>
<span class="t ui" style="left:1121.4px;top:666.20px;font-size:12.2px;color:#ffffff;transform:scaleX(0.7572);transform-origin:0 50%;">CRLF</span>
<span class="t ui" style="left:1161px;top:666.20px;font-size:12.2px;color:#ffffff;transform:scaleX(0.8523);transform-origin:0 50%;">JavaScript</span>
<svg style="left:1225.200px;top:665.60px" width="12.600" height="12.600" viewBox="0 0 12.600 12.600" fill="none" stroke="#ffffff" stroke-width="1.250"><circle cx="6.300" cy="6.300" r="5.600"/><path d="M3.600 7.300a2.900 2.900 0 0 0 5.400 0"/><circle cx="4.400" cy="4.800" r=".8" fill="#fff" stroke="none"/><circle cx="8.200" cy="4.800" r=".8" fill="#fff" stroke="none"/></svg>
<svg style="left:1253.500px;top:665.40px" width="12" height="13" viewBox="0 0 12 13" fill="none" stroke="#ffffff" stroke-width="1.300" stroke-linejoin="round"><path d="M1.200 10.200h9.600L9.600 8.300V5.200a3.600 3.600 0 0 0-7.200 0v3.100z"/><path d="M4.800 11.300a1.300 1.300 0 0 0 2.400 0" /></svg>
<div style="left:0;top:682.1px;width:1280px;height:36.9px;background:linear-gradient(#14181d 0%,#0d1116 45%,#0b0e13 100%);border-top:1px solid #50535a"></div>
<svg style="left:7px;top:682.6px" width="37" height="37" viewBox="0 0 37 37">
<defs><radialGradient id="orb" cx="50%" cy="78%" r="75%"><stop offset="0" stop-color="#3fd0ff"/><stop offset=".35" stop-color="#1b7fd0"/><stop offset=".8" stop-color="#0e3f7e"/><stop offset="1" stop-color="#0a2a5a"/></radialGradient>
<linearGradient id="orbhl" x1="0" y1="0" x2="0" y2="1"><stop offset="0" stop-color="#cfe6f8" stop-opacity=".85"/><stop offset="1" stop-color="#7db3dd" stop-opacity=".15"/></linearGradient></defs>
<ellipse cx="18.300" cy="18.700" rx="17.300" ry="16.500" fill="url(#orb)" stroke="#a9c8e0" stroke-opacity=".7" stroke-width="1.200"/>
<path d="M2.300 17a16.200 15.200 0 0 1 32 0c-9 4-23 4-32 0z" fill="url(#orbhl)" opacity=".8"/>
<g transform="translate(19.800 18.600) scale(1.220) translate(-17.500 -18.300)"><path d="M11.300 11.200c2.200-1.300 4.300-1.200 6.400.1l-1.500 6.100c-2.100-1.300-4.200-1.400-6.400-.1z" fill="#f0612a"/>
<path d="M19.200 11.800c2.100 1.300 4.200 1.400 6.400.1l-1.500 6.100c-2.200 1.300-4.300 1.200-6.400-.1z" fill="#8cc63f"/>
<path d="M9.400 18.800c2.200-1.300 4.300-1.200 6.400.1l-1.500 6.100c-2.100-1.300-4.200-1.400-6.400-.1z" fill="#3ba3e8"/>
<path d="M17.300 19.400c2.100 1.300 4.200 1.400 6.400.1l-1.500 6.100c-2.200 1.300-4.300 1.200-6.400-.1z" fill="#fbc21c"/></g>
</svg>
<svg style="left:68px;top:687.6px" width="31" height="29" viewBox="0 0 31 29">
<defs><linearGradient id="fold" x1="0" y1="0" x2="0" y2="1"><stop offset="0" stop-color="#fbe7a2"/><stop offset="1" stop-color="#f3cf6c"/></linearGradient>
<linearGradient id="stand" x1="0" y1="0" x2="0" y2="1"><stop offset="0" stop-color="#bfe0f6"/><stop offset="1" stop-color="#6fb0de"/></linearGradient></defs>
<path d="M1 3.500a1.500 1.500 0 0 1 1.500-1.500h10l2 2.500h14a1.500 1.500 0 0 1 1.500 1.500v19a1.500 1.500 0 0 1-1.500 1.500h-26a1.500 1.500 0 0 1-1.500-1.500z" fill="url(#fold)" stroke="#e2b95a" stroke-width=".6"/>
<rect x="2" y="3" width="11" height="4" fill="#f7e9b8"/><rect x="14.500" y="5.200" width="14.500" height="3.300" fill="#fdf6dc"/>
<rect x="3.500" y="2.800" width="3" height="2.600" fill="#3aa845"/><rect x="11.800" y="4.500" width="2.600" height="2.400" fill="#d9482b"/><rect x="18.500" y="5.600" width="3.200" height="2.600" fill="#5b9bd5"/>
<path d="M5 28V17.500a1.500 1.500 0 0 1 1.500-1.500h18a1.500 1.500 0 0 1 1.500 1.500V28h-5.500v-6h-10v6z" fill="url(#stand)" stroke="#8cc0e6" stroke-width=".5"/>
</svg>
<svg style="left:127.10px;top:686.00px" width="28.60" height="28.60" viewBox="-50 -50 100 100">
<circle r="50" fill="#fbc116"/>
<path d="M-42.120 -26.950A50 50 0 0 1 44.400 -23L0 -23 -19.920 11.500z" fill="#e33e2b"/>
<path d="M-2.280 49.950A50 50 0 0 1 -42.120 -26.950L-19.920 11.500 19.920 11.500z" fill="#23a455"/>
<circle r="23" fill="#ffffff"/><circle r="18.500" fill="#4a8af4"/></svg>
<div style="left:172.3px;top:682.9px;width:148px;height:35px;border:1px solid #85888b;border-radius:3px;background:linear-gradient(115deg,rgba(255,255,255,.27) 0%,rgba(255,255,255,.09) 40%,rgba(255,255,255,0) 62%),linear-gradient(#4a4d50 0%,#303336 46%,#1b1e21 54%,#23262a 100%);box-shadow:inset 0 0 0 1px rgba(255,255,255,.10)"></div>
<div style="left:324.2px;top:682.9px;width:148px;height:35px;border:1px solid #85888b;border-radius:3px;background:linear-gradient(115deg,rgba(255,255,255,.27) 0%,rgba(255,255,255,.09) 40%,rgba(255,255,255,0) 62%),linear-gradient(#4a4d50 0%,#303336 46%,#1b1e21 54%,#23262a 100%);box-shadow:inset 0 0 0 1px rgba(255,255,255,.10)"></div>
<div style="left:476.3px;top:682.9px;width:148px;height:35px;border:1px solid #c9cbcc;border-radius:3px;background:linear-gradient(115deg,rgba(255,255,255,.22) 0%,rgba(255,255,255,.10) 45%,rgba(255,255,255,0) 60%),linear-gradient(#8b8d8f 0%,#6c6e70 48%,#5e6062 52%,#787a7c 100%);box-shadow:inset 0 0 0 1px rgba(255,255,255,.10)"></div>
<div style="left:628.2px;top:682.9px;width:148px;height:35px;border:1px solid #85888b;border-radius:3px;background:linear-gradient(115deg,rgba(255,255,255,.27) 0%,rgba(255,255,255,.09) 40%,rgba(255,255,255,0) 62%),linear-gradient(#4a4d50 0%,#303336 46%,#1b1e21 54%,#23262a 100%);box-shadow:inset 0 0 0 1px rgba(255,255,255,.10)"></div>
<div style="left:780.1px;top:682.9px;width:148px;height:35px;border:1px solid #85888b;border-radius:3px;background:linear-gradient(115deg,rgba(255,255,255,.27) 0%,rgba(255,255,255,.09) 40%,rgba(255,255,255,0) 62%),linear-gradient(#4a4d50 0%,#303336 46%,#1b1e21 54%,#23262a 100%);box-shadow:inset 0 0 0 1px rgba(255,255,255,.10)"></div>
<svg style="left:181.500px;top:685.90px" width="28.600" height="28.600" viewBox="-50 -50 100 100">
<defs><linearGradient id="op" x1="0" y1="0" x2="0" y2="1"><stop offset="0" stop-color="#ff3a44"/><stop offset="1" stop-color="#c4101c"/></linearGradient></defs>
<path fill-rule="evenodd" d="M0 -50A50 50 0 1 1 0 50A50 50 0 1 1 0 -50zM-1 -36C-13 -36 -22 -20 -22 0S-13 36 -1 36 20 20 20 0 11 -36 -1 -36z" fill="url(#op)"/>
<path d="M14 -45A50 50 0 0 1 14 45 C38 30 38 -30 14 -45z" fill="#a50d18" opacity=".5"/></svg>
<span class="t ui" style="left:214.8px;top:695.25px;font-size:11.3px;color:#ffffff;text-shadow:0 0 2px rgba(0,0,0,.9);-webkit-text-stroke:.25px #fff;transform:scaleX(0.9685);transform-origin:0 50%;">Walking in the Rai...</span>
<svg style="left:333.80px;top:686.50px" width="27.40" height="27.40" viewBox="-50 -50 100 100">
<circle r="50" fill="#2aa3dc"/><path d="M-30 0 28 -23c3-1 5 1 4 5L22 26c-1 4-4 5-7 3L0 18l-8 8c-1 1-3 1-3-1l1-13 27-25c1-1 0-2-2-1L-17 8l-13-4c-3-1-3-3 0-4z" fill="#ffffff"/><path d="M-10 12 -11 25c0 2 2 2 3 1l8-8z" fill="#c8daea"/></svg>
<span class="t ui" style="left:367.5px;top:695.25px;font-size:11.3px;color:#ffffff;text-shadow:0 0 2px rgba(0,0,0,.9);-webkit-text-stroke:.25px #fff;transform:scaleX(0.9792);transform-origin:0 50%;">Telegram</span>
<svg style="left:484.300px;top:685px" width="30.500" height="30.300" viewBox="0 0 100 100"><path d="M96.460 10.800 75.860.880a6.230 6.230 0 0 0-7.110 1.200L1.300 63.580a4.170 4.170 0 0 0 0 6.170l5.510 5a4.170 4.170 0 0 0 5.320.24L93.360 13.370C96.090 11.300 100 13.250 100 16.670v-.24a6.250 6.250 0 0 0-3.540-5.630z" fill="#0a66b0"/><path d="M96.460 89.200 75.860 99.120a6.230 6.230 0 0 1-7.110-1.200L1.300 36.420a4.170 4.170 0 0 1 0-6.170l5.510-5a4.170 4.170 0 0 1 5.320-.24L93.360 86.630C96.090 88.700 100 86.750 100 83.330v.24a6.250 6.250 0 0 1-3.540 5.630z" fill="#0f80d0"/><path d="M75.860 99.130a6.230 6.230 0 0 1-7.110-1.210c2.310 2.310 6.250.67 6.250-2.590V4.670c0-3.260-3.940-4.890-6.250-2.590a6.230 6.230 0 0 1 7.110-1.210l20.600 9.910A6.250 6.250 0 0 1 100 16.410v67.180a6.250 6.250 0 0 1-3.540 5.630z" fill="#22a4f2"/></svg>
<div style="left:519.500px;top:698px;width:5px;height:5px;border-radius:50%;background:#fff"></div>
<span class="t ui" style="left:527.5px;top:695.25px;font-size:11.3px;color:#ffffff;text-shadow:0 0 2px rgba(0,0,0,.9);-webkit-text-stroke:.25px #fff;transform:scaleX(0.9887);transform-origin:0 50%;">render.js - my-a...</span>
<svg style="left:636.500px;top:688.600px" width="27.500" height="23" viewBox="0 0 27.500 22.500" preserveAspectRatio="none"><rect x=".5" y=".5" width="26.500" height="21.500" fill="#000" stroke="#7a7d80"/><rect x="1" y="1" width="25.500" height="2" fill="#b8bbbe"/><text x="3" y="10.500" font-family="Liberation Mono" font-size="6.500" font-weight="bold" fill="#e8e8e8">C:\</text><rect x="15.500" y="10" width="7" height="1.200" fill="#e8e8e8"/></svg>
<span class="t ui" style="left:670.5px;top:695.25px;font-size:11.3px;color:#ffffff;text-shadow:0 0 2px rgba(0,0,0,.9);-webkit-text-stroke:.25px #fff;transform:scaleX(1.0371);transform-origin:0 50%;">npm</span>
<svg style="left:787px;top:686px" width="31" height="30" viewBox="0 0 31 30">
<path d="M1.500 17.500C1.500 10 8 5.500 15.500 5.500S28.500 9.500 28.500 15c0 6-5 10.500-12 10.500-3 0-3.500-2.500-6-2.500s-3 2-5.500 1.500c-2.500-.5-3.500-3.500-3.500-7z" fill="#cfe8f8" stroke="#8bb8d8" stroke-width=".7"/>
<circle cx="6.500" cy="15" r="2.300" fill="#e0483a"/><circle cx="11.300" cy="10.500" r="2.300" fill="#6cbf43"/><circle cx="17.300" cy="9" r="2.300" fill="#f5c62a"/><circle cx="13.800" cy="17" r="1.800" fill="#1d3f77"/>
<path d="M27.500 3.500 15.200 28.500l1.500.3L29.500 4.500z" fill="#e9953a"/><path d="M26.500 1c2-1.200 4.500 0 4 2.500l-1.500 3-3.500-1.500z" fill="#c98a55"/></svg>
<span class="t ui" style="left:822px;top:695.25px;font-size:11.3px;color:#ffffff;text-shadow:0 0 2px rgba(0,0,0,.9);-webkit-text-stroke:.25px #fff;transform:scaleX(0.9884);transform-origin:0 50%;">Безымянный - P...</span>
<span class="t ui" style="left:942.2px;top:692.40px;font-size:11.6px;color:#ffffff;text-shadow:0 0 2px rgba(0,0,0,.9);-webkit-text-stroke:.25px #fff;transform:scaleX(0.8070);transform-origin:0 50%;">EN</span>
<svg style="left:971.800px;top:694.200px" width="13.800" height="13.600" viewBox="0 0 14.500 14.500"><rect x=".7" y=".7" width="13.100" height="13.100" fill="#a6a7a8" stroke="#dadada" stroke-width="1.300"/><rect x="1.700" y="9.600" width="5.100" height="3" fill="#6a6c6e"/><rect x="7.700" y="9.600" width="5.100" height="3" fill="#6a6c6e"/></svg>
<div style="left:996.300px;top:696.900px;width:6px;height:6px;border-radius:50%;background:#f2e21c"></div>
<div style="left:1000.500px;top:701.400px;width:5.200px;height:5.200px;border-radius:50%;background:#21c321"></div>
<svg style="left:1016.60px;top:694.40px" width="13.20" height="13.20" viewBox="-50 -50 100 100">
<circle r="50" fill="#fbc116"/>
<path d="M-42.120 -26.950A50 50 0 0 1 44.400 -23L0 -23 -19.920 11.500z" fill="#e33e2b"/>
<path d="M-2.280 49.950A50 50 0 0 1 -42.120 -26.950L-19.920 11.500 19.920 11.500z" fill="#23a455"/>
<circle r="23" fill="#ffffff"/><circle r="18.500" fill="#4a8af4"/></svg>
<svg style="left:1038.500px;top:694.500px" width="13" height="14" viewBox="0 0 13 14"><rect x="1.500" y="2.500" width="6.500" height="10.500" fill="#2a2c2e" stroke="#d8d8d8" stroke-width="1"/><rect x="3.300" y=".8" width="3" height="1.700" fill="#d8d8d8"/><path d="M8 1.500v2.500M11 1.500v2.500M7 4h5v2.500a2.500 2.500 0 0 1-5 0z" fill="#eee" stroke="#eee" stroke-width=".8"/><path d="M1 7.500 6.500 13M6.500 7.500 1 13" stroke="#e21b24" stroke-width="2"/></svg>
<svg style="left:1060.500px;top:694px" width="15" height="14" viewBox="0 0 15 14" fill="none"><path d="M.8 4.600h2.800L7.300.9v12.200L3.600 9.400H.8z" fill="#f2f2f2"/><path d="M9.300 5a2.800 2.800 0 0 1 0 4M11 3a5.300 5.300 0 0 1 0 8" stroke="#f2f2f2" stroke-width="1.100"/></svg>
<svg style="left:1105.700px;top:693.600px" width="15.300" height="15.200" viewBox="0 0 15.300 15.200"><defs><linearGradient id="tr" x1="0" y1="0" x2="0" y2="1"><stop offset="0" stop-color="#5db4ee"/><stop offset="1" stop-color="#1c7fd2"/></linearGradient></defs><rect x=".5" y=".5" width="14.300" height="14.200" rx="1.800" fill="url(#tr)" stroke="#9fd0f2" stroke-width=".9"/><rect x="3" y="1.800" width="8.800" height="5.800" rx=".8" fill="#2f86cf" stroke="#d7ecfa" stroke-width=".9"/><path d="M5.800 3.200 8.800 6.200M8.800 3.200 5.800 6.200" stroke="#ffffff" stroke-width="1"/><path d="M4.400 2.600v4.200M10.400 2.600v4.200" stroke="#d7ecfa" stroke-width=".7"/><path d="M.9 9.500C3.500 10 6 11.800 7 14.300H2.300A1.400 1.400 0 0 1 .9 12.900z" fill="#f2a73a"/><path d="M1 8.200c3 .3 6.300 2.500 7.300 6" stroke="#e9f4fc" stroke-width=".8" fill="none"/><path d="M13.300 10.300H8.700M13.300 12.300H8.700M10.300 8.800 8 11.300l2.300 2.500" stroke="#ffffff" stroke-width="1.100" fill="none"/></svg>
<svg style="left:1151.800px;top:694.800px" width="13.400" height="13.300" viewBox="0 0 13.400 13.300"><rect width="12.800" height="13.300" fill="#3a3b48"/><path d="M.6 6.300C2 2.900 6.500 1.500 10.300 3.400 10.800 6.800 8 10 4.300 10 2.500 9.800 1 8.300.6 6.300z" fill="#86b81c"/><path d="M2.600 6.400c1-1.800 3.300-2.500 5-1.600-.3 1.800-1.800 3.200-3.500 3.200-.7-.2-1.300-.8-1.500-1.600z" fill="#4f6f1a"/><path d="M4 6.300c.5-.8 1.600-1.200 2.400-.8-.2.900-.9 1.500-1.700 1.500-.3-.1-.6-.4-.7-.7z" fill="#a5d32a"/><rect x="10.900" y="5.300" width="2.300" height="5" fill="#f0e326"/><rect x="10.900" y="11" width="2.300" height="1.900" fill="#f0e326"/></svg>
<svg style="left:1173.30px;top:693.90px" width="14.60" height="14.60" viewBox="-50 -50 100 100">
<circle r="50" fill="#2aa3dc"/><path d="M-30 0 28 -23c3-1 5 1 4 5L22 26c-1 4-4 5-7 3L0 18l-8 8c-1 1-3 1-3-1l1-13 27-25c1-1 0-2-2-1L-17 8l-13-4c-3-1-3-3 0-4z" fill="#ffffff"/><path d="M-10 12 -11 25c0 2 2 2 3 1l8-8z" fill="#c8daea"/></svg>
<span class="t ui" style="left:1218.2px;top:687.90px;font-size:11.6px;color:#ffffff;text-shadow:0 0 2px rgba(0,0,0,.9);-webkit-text-stroke:.25px #fff;transform:scaleX(0.8202);transform-origin:0 50%;">23:51</span>
<span class="t ui" style="left:1205px;top:703.60px;font-size:11.6px;color:#ffffff;text-shadow:0 0 2px rgba(0,0,0,.9);-webkit-text-stroke:.25px #fff;transform:scaleX(0.8693);transform-origin:0 50%;">25.11.2019</span>
<div style="left:1267.400px;top:682.9px;width:13px;height:35px;border:1px solid #6d7073;border-right:0;background:linear-gradient(90deg,#3a3d40,#15181b 60%,#24272a)"></div>
</div></body></html>
